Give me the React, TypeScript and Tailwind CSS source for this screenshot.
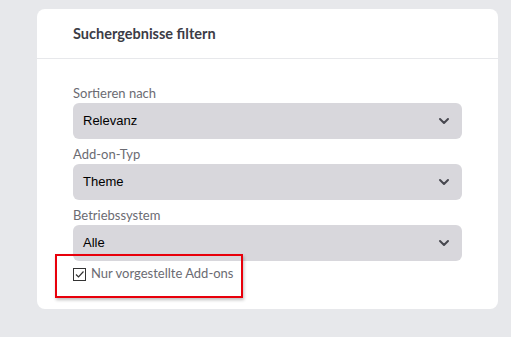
import { ChevronDown } from 'lucide-react';

const fields = [
  { label: 'Sortieren nach', value: 'Relevanz' },
  { label: 'Add-on-Typ', value: 'Theme' },
  { label: 'Betriebssystem', value: 'Alle' },
];

const App = () => {
  return (
    <div className="w-[511px] h-[337px] bg-[#e7e8eb] pt-[9px] pl-[37px] font-['Lato',sans-serif]">
      <div className="w-[461px] h-[300px] bg-white rounded-lg">
        <div className="h-[50px] border-b border-[#e7e8eb] px-9 flex items-center">
          <h2 className="text-[14.5px] font-bold text-[#3c3c46]">Suchergebnisse filtern</h2>
        </div>
        <div className="px-9 pt-[25px] relative">
          {fields.map((f) => (
            <div key={f.label} className="mb-[6px]">
              <div className="text-[13px] leading-[18px] text-[#6b6b72] mb-[1px]">{f.label}</div>
              <div className="h-9 rounded-md bg-[#d8d7dc] flex items-center justify-between pl-[10px] pr-[10px]">
                <span className="text-[13px] text-black font-['Liberation_Sans',sans-serif]">{f.value}</span>
                <ChevronDown size={16} strokeWidth={3} className="text-[#47474f]" />
              </div>
            </div>
          ))}
          <label className="flex items-center gap-[5px] -mt-[2px] h-[18px]">
            <span className="w-[13px] h-[13px] border border-[#333] bg-white flex items-center justify-center">
              <svg width="11" height="11" viewBox="0 0 11 11">
                <path d="M2 5.5 L4.5 8 L9.5 2.5" fill="none" stroke="#333" strokeWidth="1.2" />
              </svg>
            </span>
            <span className="text-[13px] text-[#6b6b72]">Nur vorgestellte Add-ons</span>
          </label>
          <div className="absolute left-[18px] top-[195px] w-[188px] h-[44px] border-2 border-[#e8000b] shadow-[1px_2px_3px_rgba(0,0,0,0.25)]" />
        </div>
      </div>
    </div>
  );
};

export default App;
